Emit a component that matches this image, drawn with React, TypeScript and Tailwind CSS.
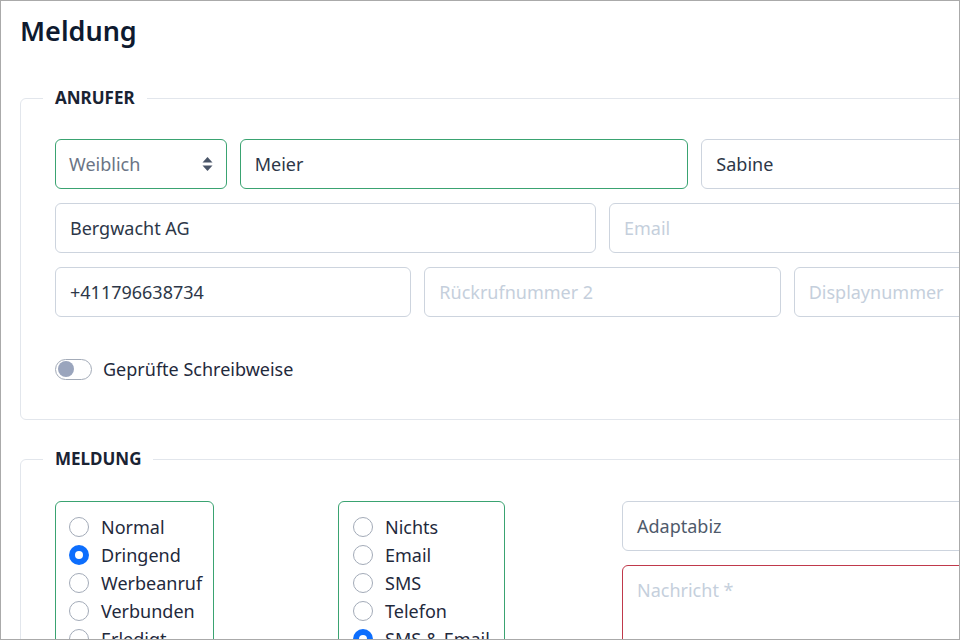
import React, { useState } from 'react'

const font = { fontFamily: '"Noto Sans", Inter, sans-serif' }

const SelectArrows = () => (
  <svg width="11" height="16" viewBox="0 0 11 16" className="text-[#4a5568]">
    <path d="M5.5 1 L10.5 6.5 L0.5 6.5 Z" fill="currentColor" />
    <path d="M5.5 15 L10.5 9.5 L0.5 9.5 Z" fill="currentColor" />
  </svg>
)

const TextInput = ({
  value,
  placeholder,
  className = '',
  valid = false,
}: {
  value?: string
  placeholder?: string
  className?: string
  valid?: boolean
}) => (
  <div
    className={`h-[50px] rounded-md border bg-white pl-[14px] flex items-center text-[18px] ${
      valid ? 'border-[#3aa371]' : 'border-[#cdd4de]'
    } ${className}`}
  >
    {value ? (
      <span className="text-[#2d3748]">{value}</span>
    ) : (
      <span className="text-[#c5cfdc]">{placeholder}</span>
    )}
  </div>
)

const Radio = ({ label, checked }: { label: string; checked?: boolean }) => (
  <label className="flex items-center h-[28px] gap-3 text-[18px] text-[#1f2a3c]">
    {checked ? (
      <span className="w-5 h-5 rounded-full bg-[#0d6efd] flex items-center justify-center">
        <span className="w-2 h-2 rounded-full bg-white" />
      </span>
    ) : (
      <span className="w-5 h-5 rounded-full border border-[#a3abb8] bg-white" />
    )}
    <span>{label}</span>
  </label>
)

const App = () => {
  const [checked] = useState(false)

  return (
    <div
      className="w-[960px] h-[640px] overflow-hidden border border-[#aaaaaa] bg-white"
      style={font}
    >
      <div className="w-[1210px] px-[19px]">
        <h1 className="text-[27px] font-semibold text-[#0e1a2f] leading-[34px] pt-[13px]">
          Meldung
        </h1>

        <fieldset className="mt-[38px] rounded-md border border-[#e2e6ec] px-[34px] pt-[29px] pb-[36px]">
          <legend className="-ml-3 px-3 text-[17px] font-bold text-[#1a2333] leading-[24px]">
            ANRUFER
          </legend>
          <div className="grid grid-cols-12 gap-x-[13px] gap-y-[14px] w-[1095px]">
            <div className="col-span-2 h-[50px] rounded-md border border-[#3aa371] pl-[13px] pr-[13px] flex items-center justify-between text-[18px] text-[#6b7485]">
              <span>Weiblich</span>
              <SelectArrows />
            </div>
            <TextInput className="col-span-5" value="Meier" valid />
            <TextInput className="col-span-5" value="Sabine" />
            <TextInput className="col-span-6" value="Bergwacht AG" />
            <TextInput className="col-span-6" placeholder="Email" />
            <TextInput className="col-span-4" value="+411796638734" />
            <TextInput className="col-span-4" placeholder="Rückrufnummer 2" />
            <TextInput className="col-span-4" placeholder="Displaynummer" />
          </div>
          <div className="mt-[38px] flex items-center gap-[11px] h-[28px]">
            <span className="w-[37px] h-[21px] rounded-full border border-[#a3abb8] bg-white flex items-center px-[2px]">
              <span
                className={`w-4 h-4 rounded-full bg-[#9aa5bd] ${checked ? 'ml-auto' : ''}`}
              />
            </span>
            <span className="text-[18px] text-[#1f2a3c]">Geprüfte Schreibweise</span>
          </div>
        </fieldset>

        <fieldset className="mt-[27px] rounded-md border border-[#e2e6ec] px-[34px] pt-[30px] pb-[30px]">
          <legend className="-ml-3 px-3 text-[17px] font-bold text-[#1a2333] leading-[24px]">
            MELDUNG
          </legend>
          <div className="grid grid-cols-[270px_271px_1fr] gap-x-[13px] w-[1095px] items-start">
            <div>
              <div className="inline-flex flex-col rounded-md border border-[#3aa371] pl-[13px] pr-[11px] pt-[11px] pb-[12px]">
                <Radio label="Normal" />
                <Radio label="Dringend" checked />
                <Radio label="Werbeanruf" />
                <Radio label="Verbunden" />
                <Radio label="Erledigt" />
              </div>
            </div>
            <div>
              <div className="inline-flex flex-col rounded-md border border-[#3aa371] pl-[14px] pr-[14px] pt-[11px] pb-[12px]">
                <Radio label="Nichts" />
                <Radio label="Email" />
                <Radio label="SMS" />
                <Radio label="Telefon" />
                <Radio label="SMS & Email" checked />
              </div>
            </div>
            <div className="flex flex-col gap-[14px]">
              <div className="h-[50px] rounded-md border border-[#cdd4de] pl-[14px] flex items-center text-[18px] text-[#4f5a6b]">
                Adaptabiz
              </div>
              <div className="h-[140px] rounded-md border border-[#c0394b] pl-[14px] pt-[11px] text-[18px] text-[#c5cfdc]">
                Nachricht *
              </div>
            </div>
          </div>
        </fieldset>
      </div>
    </div>
  )
}

export default App
